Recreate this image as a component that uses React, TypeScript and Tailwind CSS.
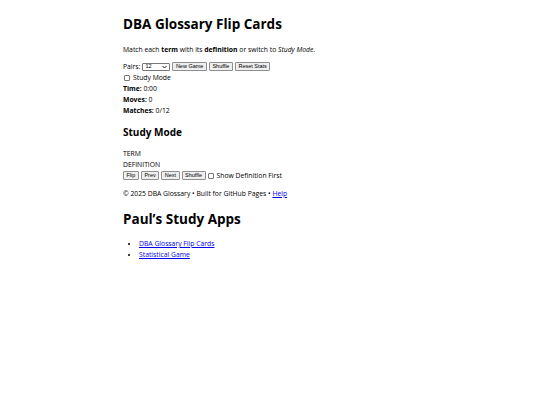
import React from 'react'

const body = { fontFamily: '"Open Sans", "Noto Sans", sans-serif' }

function Btn({ children }: { children: React.ReactNode }) {
  return (
    <button className="flex h-[9px] items-center rounded-[1px] border border-[#8f8f8f] bg-[#efefef] px-[2.5px] text-[5.5px] leading-none text-black [font-family:'Liberation_Sans',Arial,sans-serif]">
      {children}
    </button>
  )
}

function Box() {
  return <span className="inline-block h-[6px] w-[6px] rounded-[1px] border border-[#767676] bg-white" />
}

export default function App() {
  return (
    <div className="min-h-[405px] w-full bg-white text-black" style={body}>
      <div className="mx-auto w-[294px] pt-[14px] text-[6.8px] leading-[11px]">
        <h1 className="text-[13.5px] font-bold leading-[20px]">DBA Glossary Flip Cards</h1>

        <p className="mt-[10px]">
          Match each <b>term</b> with its <b>definition</b> or switch to <i>Study Mode</i>.
        </p>

        <div className="mt-[6px] flex h-[11px] items-center gap-[2px]">
          <span>Pairs:</span>
          <span className="flex h-[8px] w-[28px] items-center justify-between rounded-[1px] border border-[#767676] px-[2px] text-[5.5px] leading-none [font-family:'Liberation_Sans',Arial,sans-serif]">
            12
            <svg width="5" height="4" viewBox="0 0 10 6"><path d="M1 1l4 4 4-4" fill="none" stroke="#000" strokeWidth="1.8" /></svg>
          </span>
          <Btn>New Game</Btn>
          <Btn>Shuffle</Btn>
          <Btn>Reset Stats</Btn>
        </div>

        <label className="flex items-center gap-[3px] pl-[1px]">
          <Box />
          Study Mode
        </label>
        <div><b>Time:</b> 0:00</div>
        <div><b>Moves:</b> 0</div>
        <div><b>Matches:</b> 0/12</div>

        <h2 className="mt-[9px] text-[10px] font-bold leading-[14px]">Study Mode</h2>

        <div className="mt-[9px]">TERM</div>
        <div>DEFINITION</div>
        <div className="flex h-[11px] items-center gap-[2px]">
          <Btn>Flip</Btn>
          <Btn>Prev</Btn>
          <Btn>Next</Btn>
          <Btn>Shuffle</Btn>
          <Box />
          <span className="ml-[1px]">Show Definition First</span>
        </div>

        <p className="mt-[7px]">
          © 2025 DBA Glossary • Built for GitHub Pages • <a className="text-[#0000ee] underline">Help</a>
        </p>

        <h2 className="mt-[10px] text-[13.5px] font-bold leading-[20px]">Paul’s Study Apps</h2>

        <ul className="mt-[9px] list-disc pl-[16px]">
          <li><a className="text-[#0000ee] underline">DBA Glossary Flip Cards</a></li>
          <li><a className="text-[#0000ee] underline">Statistical Game</a></li>
        </ul>
      </div>
    </div>
  )
}
